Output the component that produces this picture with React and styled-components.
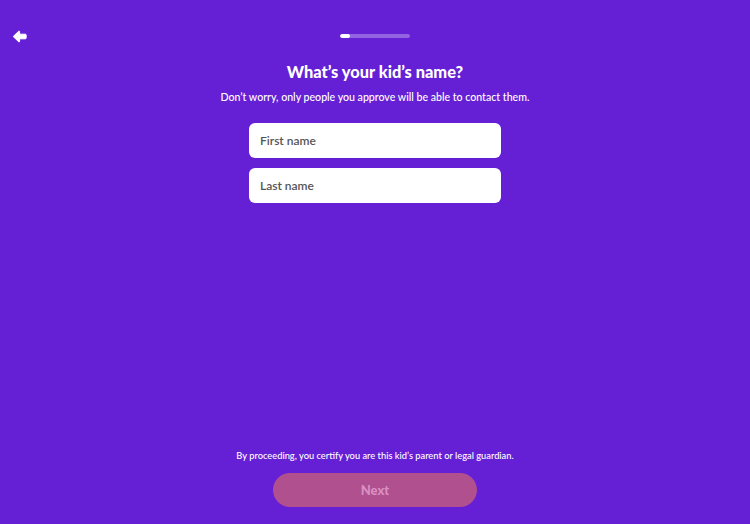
import React from "react";
import styled, { createGlobalStyle } from "styled-components";

const Global = createGlobalStyle`
  html, body { margin: 0; padding: 0; background: #6520d5; }
  * { box-sizing: border-box; }
`;

const Page = styled.div`
  width: 750px;
  height: 524px;
  background: #6520d5;
  display: flex;
  flex-direction: column;
  align-items: center;
  font-family: Lato, "Noto Sans", sans-serif;
  color: #ffffff;
  padding: 29px 0 17px;
`;

const TopBar = styled.div`
  width: 100%;
  display: grid;
  grid-template-columns: 1fr auto 1fr;
  align-items: center;
  height: 14px;
  padding: 0 12px;
`;

const BackButton = styled.button`
  border: none;
  background: none;
  padding: 0;
  width: 16px;
  height: 14px;
  display: flex;
  align-items: center;
  cursor: pointer;
`;

const Progress = styled.div`
  width: 70px;
  height: 4px;
  border-radius: 2px;
  background: rgba(255, 255, 255, 0.3);
  overflow: hidden;
`;

const ProgressFill = styled.div`
  height: 100%;
  border-radius: 2px;
  background: #ffffff;
`;

const Title = styled.h1`
  margin: 19px 0 0;
  font-size: 16.4px;
  line-height: 20px;
  font-weight: 900;
`;

const Subtitle = styled.p`
  margin: 8px 0 0;
  font-size: 10.6px;
  line-height: 14px;
  font-weight: 500;
`;

const Form = styled.div`
  margin-top: 19px;
  display: flex;
  flex-direction: column;
  gap: 10px;
`;

const Input = styled.input`
  width: 252px;
  height: 35px;
  border: none;
  border-radius: 6px;
  background: #ffffff;
  padding: 0 11px;
  font-family: Lato, "Noto Sans", sans-serif;
  font-size: 12px;
  font-weight: 600;
  color: #333;
  outline: none;
  &::placeholder { color: #555555; }
`;

const Spacer = styled.div`
  flex: 1;
`;

const Note = styled.p`
  margin: 0;
  font-size: 9.3px;
  line-height: 12px;
  font-weight: 500;
`;

const NextButton = styled.button`
  margin-top: 11px;
  width: 204px;
  height: 34px;
  border: none;
  border-radius: 17px;
  background: #b0508e;
  color: #d98fc2;
  font-family: Lato, "Noto Sans", sans-serif;
  font-size: 13px;
  font-weight: 900;
`;

const BackArrow = () => (
  <svg width="15" height="13" viewBox="0 0 15 13">
    <path
      d="M1.2 6.5 L6.6 1.3 Q7.4 0.6 7.6 1.6 L7.6 4.2 L13.2 4.2 Q14.2 4.2 14.2 5.2 L14.2 7.8 Q14.2 8.8 13.2 8.8 L7.6 8.8 L7.6 11.4 Q7.4 12.4 6.6 11.7 Z"
      fill="#ffffff"
      stroke="#ffffff"
      strokeWidth="1"
      strokeLinejoin="round"
    />
  </svg>
);

export default function App() {
  return (
    <Page>
      <Global />
      <TopBar>
        <BackButton aria-label="Back">
          <BackArrow />
        </BackButton>
        <Progress>
          <ProgressFill style={{ width: `${(1 / 7) * 100}%` }} />
        </Progress>
        <div />
      </TopBar>
      <Title>What’s your kid’s name?</Title>
      <Subtitle>Don’t worry, only people you approve will be able to contact them.</Subtitle>
      <Form>
        <Input placeholder="First name" />
        <Input placeholder="Last name" />
      </Form>
      <Spacer />
      <Note>By proceeding, you certify you are this kid’s parent or legal guardian.</Note>
      <NextButton disabled>Next</NextButton>
    </Page>
  );
}
